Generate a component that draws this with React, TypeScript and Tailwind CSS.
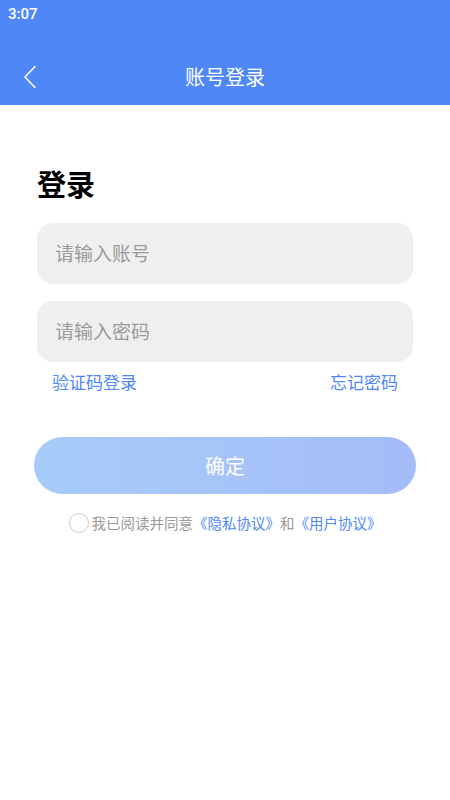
const font = { fontFamily: '"Noto Sans CJK SC", "Noto Sans", sans-serif' };

export default function App() {
  return (
    <div className="w-[450px] h-[800px] bg-white flex flex-col" style={font}>
      {/* header */}
      <div className="bg-[#4f88f6] h-[105px] flex flex-col text-white">
        <div className="h-[26px] px-[8px] pt-[4px] text-[15px] font-medium leading-[20px]" style={{ fontFamily: "Roboto, sans-serif" }}>
          3:07
        </div>
        <div className="relative flex-1 flex items-center justify-center pt-[22px]">
          <svg
            className="absolute left-[23px] top-[39px]"
            width="14"
            height="24"
            viewBox="0 0 14 24"
            fill="none"
            stroke="white"
            strokeWidth="1.6"
            strokeLinecap="round"
            strokeLinejoin="round"
          >
            <polyline points="12,1.5 2,12 12,22.5" />
          </svg>
          <span className="text-[20px] leading-none">账号登录</span>
        </div>
      </div>

      <div className="px-[37px] pt-[64px] flex flex-col">
        <h1 className="text-[29px] font-bold leading-none text-black">登录</h1>

        <div className="mt-[25px] h-[61px] rounded-[16px] bg-[#efefef] flex items-center px-[18px] text-[19px] text-[#9a9a9a]">
          请输入账号
        </div>
        <div className="mt-[17px] h-[61px] rounded-[16px] bg-[#efefef] flex items-center px-[18px] text-[19px] text-[#9a9a9a]">
          请输入密码
        </div>

        <div className="mt-[8px] flex justify-between px-[15px] text-[17px] leading-[24px] text-[#4f88f6]">
          <span>验证码登录</span>
          <span>忘记密码</span>
        </div>
      </div>

      <div className="px-[34px] mt-[43px]">
        <div className="h-[57px] rounded-full bg-gradient-to-r from-[#a7ccf9] to-[#a4bcf8] flex items-center justify-center text-white text-[20px]">
          确定
        </div>
      </div>

      <div className="mt-[18px] flex items-center justify-center text-[14.5px] text-[#9a9a9a]">
        <span className="w-[20px] h-[20px] rounded-full border-[1.5px] border-[#cacaca] mr-[3px]" />
        <span>我已阅读并同意</span>
        <span className="text-[#4f88f6]">《隐私协议》</span>
        <span>和</span>
        <span className="text-[#4f88f6]">《用户协议》</span>
      </div>
    </div>
  );
}
